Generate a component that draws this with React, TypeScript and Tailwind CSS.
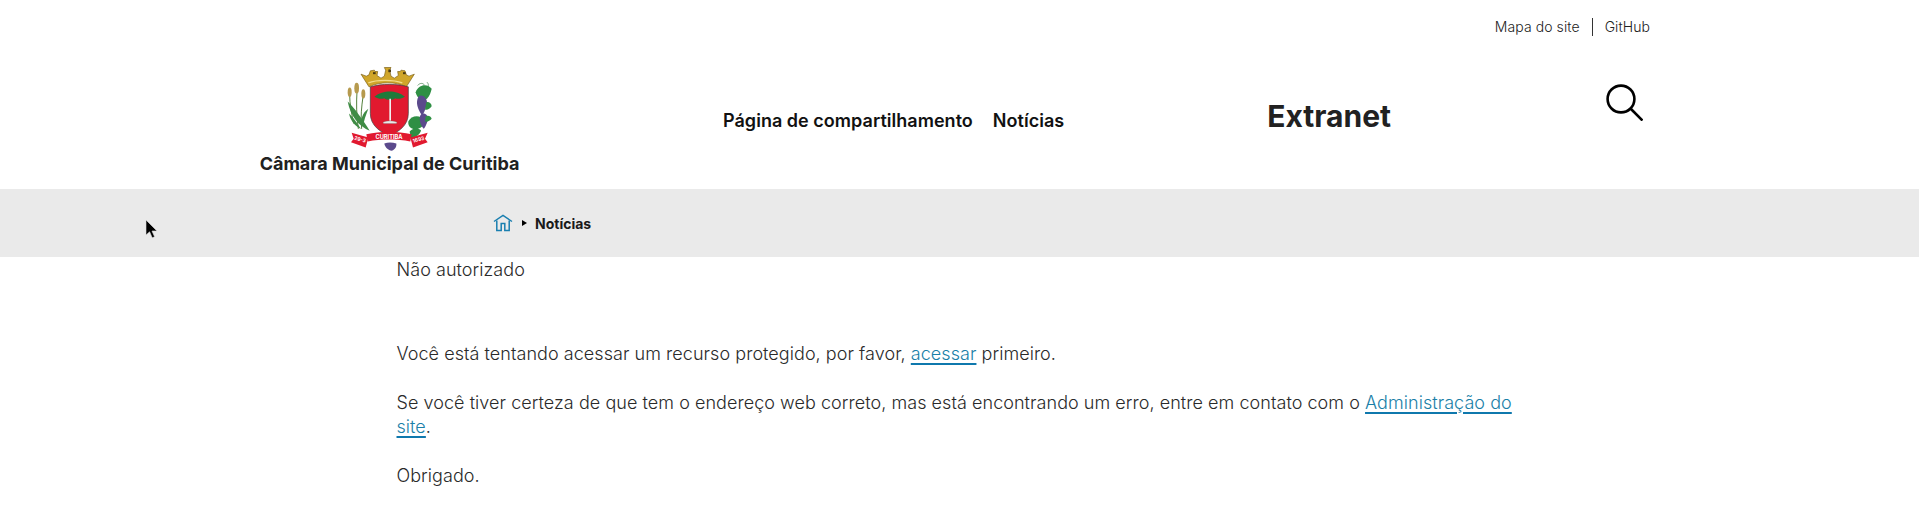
const Crest = () => (
  <svg width="90" height="87" viewBox="72 15 270 260" aria-hidden="true">
    {/* crown */}
    <path d="M120 42l16 6 8 -4 4 -12 12 -2 2 4 8 0 -2 12 12 8 10 -6 4 -18 -4 -8 20 0 -4 8 4 18 10 6 12 -8 -2 -12 8 0 2 -4 12 2 4 12 8 4 16 -6 -24 38c-30 -16 -80 -16 -112 0z" fill="#d0a62a" stroke="#7a5f16" strokeWidth="2" />
    <path d="M142 68c24 -10 76 -10 102 0" fill="none" stroke="#f2dc8a" strokeWidth="4" />
    <rect x="156" y="36" width="8" height="6" fill="#4a3a12" />
    <rect x="202" y="28" width="8" height="8" fill="#4a3a12" />
    <rect x="246" y="36" width="8" height="6" fill="#4a3a12" />
    {/* shield */}
    <path d="M148 80c36 -10 78 -10 114 0v80c0 36 -30 56 -57 66c-27 -10 -57 -30 -57 -66z" fill="#e1192f" stroke="#3b3b3b" strokeWidth="2" />
    {/* pine */}
    <path d="M160 110c14 -12 30 -16 46 -16s32 4 46 16c-10 6 -22 8 -30 4c-4 6 -26 6 -32 0c-8 4 -20 2 -30 -4z" fill="#1f7a3a" />
    <path d="M205 116h5v66h-5z" fill="#f1f1f1" />
    <path d="M186 186c10 -5 32 -5 42 0l-2 4h-38z" fill="#e8e8e8" stroke="#777" strokeWidth="1" />
    {/* wheat */}
    <path d="M98 190c-6 -30 -12 -58 -12 -86M112 206c-6 -40 -6 -80 -4 -112M122 206c-4 -36 0 -68 4 -96" fill="none" stroke="#54813d" strokeWidth="3" />
    <ellipse cx="86" cy="96" rx="6" ry="14" fill="#b69a4e" />
    <ellipse cx="107" cy="84" rx="7" ry="16" fill="#b69a4e" />
    <ellipse cx="127" cy="101" rx="6" ry="14" fill="#b69a4e" />
    <path d="M80 124c16 14 50 60 66 88c-30 -12 -58 -44 -66 -88zM142 146c-8 20 -14 38 -16 54c-10 -20 -2 -42 16 -54zM84 160c12 10 28 34 36 46c-16 -6 -32 -24 -36 -46z" fill="#3f8c45" />
    {/* vine */}
    <path d="M290 76c6 -8 16 -8 20 -2M318 66c4 4 6 10 2 14" fill="none" stroke="#3c7a45" strokeWidth="2" />
    <path d="M284 96c8 -22 34 -28 48 -10c-2 10 -6 22 -14 30c-16 8 -30 -2 -34 -20z" fill="#2f8f44" />
    <path d="M262 184c8 -18 36 -22 46 -4c4 16 -10 26 -26 28c-12 -2 -22 -10 -20 -24z" fill="#2f8f44" />
    <path d="M266 214c8 -10 24 -12 34 -4c-2 12 -14 20 -30 24z" fill="#2f8f44" />
    <path d="M300 106c10 0 18 10 18 22c0 10 -10 32 -14 38c-8 -8 -16 -26 -16 -38c0 -12 4 -22 12 -22z" fill="#5b4a8c" />
    <path d="M306 160c10 0 16 8 14 20c-2 10 -8 22 -12 26c-8 -8 -12 -22 -12 -30c0 -10 4 -16 10 -16z" fill="#5b4a8c" />
    <path d="M316 126c8 -2 16 4 16 12c-6 8 -12 12 -20 10zM314 168c8 -4 16 0 18 8c-6 6 -12 10 -20 8z" fill="#2f8f44" />
    <path d="M190 250c10 -4 24 -4 36 0c2 12 -8 20 -14 22c-10 -2 -20 -10 -22 -22z" fill="#5b4a8c" />
    {/* ribbons */}
    <path d="M92 218l50 14 -8 30 -44 -16 8 -10z" fill="#e1192f" />
    <path d="M320 218l-52 14 8 30 44 -16 -8 -10z" fill="#e1192f" />
    <path d="M136 222c44 -10 92 -10 136 0l-4 22c-40 -8 -88 -8 -128 0z" fill="#e1192f" />
    <text x="204" y="238" textAnchor="middle" fontSize="17" fontWeight="700" fill="#fff" fontFamily="Inter, sans-serif">CURITIBA</text>
    <text x="116" y="243" textAnchor="middle" fontSize="15" fontWeight="700" fill="#fff" fontFamily="Inter, sans-serif" transform="rotate(15 116 243)">29-3</text>
    <text x="294" y="243" textAnchor="middle" fontSize="15" fontWeight="700" fill="#fff" fontFamily="Inter, sans-serif" transform="rotate(-15 294 243)">1693</text>
  </svg>
)

const HomeIcon = () => (
  <svg width="20" height="20" viewBox="0 0 20 20" fill="none" stroke="#1a7fb0" strokeWidth="1.5" aria-hidden="true">
    <path d="M1 8.5L10 2.5l9 6" />
    <path d="M3.8 7.5V17.5h4.4V10.5h3.6v7h4.4V7.5" />
  </svg>
)

const SearchIcon = () => (
  <svg width="37" height="37" viewBox="0 0 37 37" fill="none" stroke="#000" strokeWidth="2.6" aria-hidden="true">
    <circle cx="15" cy="15" r="13.4" />
    <path d="M25 25l11.5 11.5" />
  </svg>
)

const Cursor = () => (
  <svg className="absolute left-[145px] top-[219px]" width="14" height="20" viewBox="0 0 14 20" aria-hidden="true">
    <path d="M1 1v15l3.6 -3.2 2.6 6 2.4 -1 -2.6 -5.8h5z" fill="#000" stroke="#ddd" strokeWidth="0.6" />
  </svg>
)

export default function App() {
  return (
    <div className="relative min-h-[513px] bg-white font-['Inter',sans-serif] text-[#212121]">
      <Cursor />

      <div className="h-[53px] flex justify-end items-center pr-[269px] text-[14px] font-light tracking-[0.08px] text-[#222]">
        <a>Mapa do site</a>
        <span className="mx-[12px] h-[18px] w-px bg-[#333]" />
        <a>GitHub</a>
      </div>

      <header className="h-[136px] flex">
        <div className="w-[260px] shrink-0" />
        <div className="w-[259px] shrink-0 flex flex-col items-center pt-[12px]">
          <Crest />
          <span className="text-[18px] leading-[22px] font-bold whitespace-nowrap mt-[1px]">Câmara Municipal de Curitiba</span>
        </div>
        <nav className="ml-[204px] pt-[57px] flex gap-[20px] text-[18px] leading-[22px] font-semibold tracking-[0.03px] text-[#111] whitespace-nowrap">
          <a>Página de compartilhamento</a>
          <a>Notícias</a>
        </nav>
        <div className="ml-[203px] pt-[44px] text-[30px] leading-[38px] font-bold whitespace-nowrap">Extranet</div>
        <div className="ml-[215px] pt-[31px]">
          <SearchIcon />
        </div>
      </header>

      <div className="h-[68px] bg-[#eaeaea] flex items-center pl-[493px]">
        <HomeIcon />
        <span className="ml-[9px] mr-[8px] w-0 h-0 border-y-[3.5px] border-y-transparent border-l-[5px] border-l-black" />
        <span className="text-[14px] font-bold text-[#1a1a1a]">Notícias</span>
      </div>

      <main className="pl-[396.5px] w-[1530px] text-[18px] leading-[24px] font-light tracking-[0.05px] text-[#2a2a2a]">
        <p className="pt-[1px]">Não autorizado</p>
        <p className="mt-[60px]">
          Você está tentando acessar um recurso protegido, por favor, <a className="text-[#1a7fa8] underline decoration-[#0f78ad] decoration-[1.5px] underline-offset-[3px]">acessar</a> primeiro.
        </p>
        <p className="mt-[25px]">
          Se você tiver certeza de que tem o endereço web correto, mas está encontrando um erro, entre em contato com o <a className="text-[#1a7fa8] underline decoration-[#0f78ad] decoration-[1.5px] underline-offset-[3px]">Administração do site</a>.
        </p>
        <p className="mt-[25px]">Obrigado.</p>
      </main>
    </div>
  )
}
